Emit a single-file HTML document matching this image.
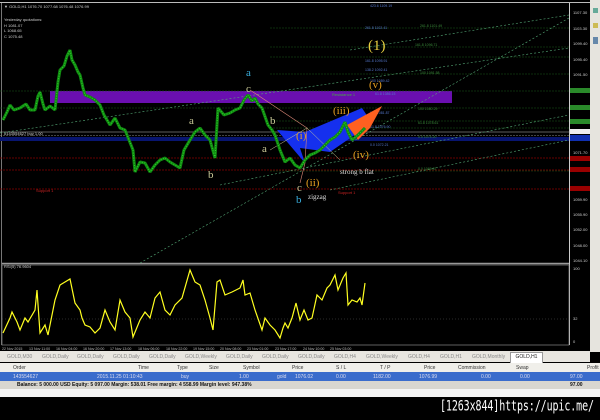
<!DOCTYPE html>
<html><head><meta charset="utf-8"><style>
body{margin:0;width:600px;height:420px;background:#000;overflow:hidden;font-family:"Liberation Sans",sans-serif;position:relative}
.abs{position:absolute}
.tabs{left:0;top:351px;width:590px;height:11px;background:#e8e6e0;font-size:5px;color:#888}
.tabs span{position:absolute;top:3px}
.hdr{left:0;top:363px;width:600px;height:9px;background:#f0efea;font-size:5px;color:#333}
.row{left:0;top:372px;width:600px;height:9px;background:#3a6ccc;font-size:5px;color:#dde}
.bal{left:0;top:381px;width:600px;height:8px;background:#d8d6d0;font-size:5px;font-weight:bold;color:#111}
.wh{left:0;top:389px;width:600px;height:8px;background:#f4f4f4}
.hdr span,.row span{position:absolute;top:2px}
</style></head><body>
<svg class="abs" style="left:0;top:0" width="600" height="352">
<rect x="0" y="0" width="600" height="352" fill="#000"/>
<line x1="0" y1="2.5" x2="590" y2="2.5" stroke="#bbb"/>
<rect x="590" y="0" width="10" height="352" fill="#e6e4de"/>
<rect x="593" y="8" width="5" height="5" fill="#6a9"/><rect x="593" y="23" width="5" height="5" fill="#cb5"/><rect x="593" y="37" width="5" height="7" fill="#68a"/>
<line x1="569.5" y1="3" x2="569.5" y2="345" stroke="#ccc"/>
<line x1="2" y1="263.5" x2="569" y2="263.5" stroke="#999" stroke-width="1.5"/>
<rect x="2" y="265" width="567" height="80" fill="none" stroke="#888" stroke-width=".7"/>
<line x1="1.5" y1="3" x2="1.5" y2="345" stroke="#777"/>
<rect x="50" y="91" width="402" height="12" fill="#6a0fb0"/>
<rect x="0" y="137" width="569" height="4" fill="#081570"/>
<line x1="0" y1="132" x2="569" y2="132" stroke="#bbb" stroke-width=".6"/>
<line x1="0" y1="135.5" x2="569" y2="135.5" stroke="#888" stroke-dasharray="2 1" stroke-width=".5"/>
<g stroke="#800" stroke-width=".7" stroke-dasharray="2 1"><line x1="0" y1="158" x2="569" y2="158"/><line x1="0" y1="170" x2="569" y2="170"/><line x1="0" y1="189" x2="569" y2="189"/></g>
<g stroke="#1a5a1a" stroke-width=".6" stroke-dasharray="2 1"><line x1="0" y1="91" x2="569" y2="91"/><line x1="0" y1="108" x2="569" y2="108"/><line x1="270" y1="28" x2="569" y2="28"/><line x1="270" y1="47" x2="569" y2="47"/><line x1="270" y1="57" x2="569" y2="57"/><line x1="270" y1="74" x2="569" y2="74"/><line x1="270" y1="121" x2="569" y2="121"/><line x1="270" y1="128" x2="569" y2="128"/><line x1="270" y1="171" x2="569" y2="171"/></g>
<g stroke="#5a7" stroke-width=".6" stroke-dasharray="2 2"><line x1="0" y1="133" x2="569" y2="48"/><line x1="220" y1="185" x2="569" y2="115"/><line x1="140" y1="263" x2="569" y2="18"/><line x1="330" y1="190" x2="569" y2="140"/><line x1="350" y1="50" x2="569" y2="15"/></g>
<g font-size="3.5" fill="#5577cc"><text x="370" y="7">423.6 1109.19</text><text x="365" y="29">261.8 1102.41</text><text x="365" y="62">161.8 1095.91</text><text x="365" y="71">138.2 1092.41</text><text x="370" y="82">100 1089.42</text><text x="375" y="95">61.8 1086.15</text><text x="370" y="114">100 1081.87</text><text x="370" y="128">61.8 1076.90</text><text x="370" y="146">0.0 1072.21</text></g>
<g font-size="3.5" fill="#3a8a3a"><text x="420" y="27">261.8 1101.49</text><text x="415" y="46">161.8 1096.71</text><text x="420" y="74">100 1091.58</text><text x="418" y="110">100 1080.29</text><text x="418" y="124">61.8 1078.61</text><text x="418" y="138">0.0 1074.20</text><text x="418" y="170">0.0 1065.37</text></g>
<text x="332" y="96" font-size="4" fill="#4a4">Resistance 1</text>
<text x="36" y="192" font-size="4" fill="#c22">Support 1</text><text x="338" y="194" font-size="4" fill="#c22">Support 1</text>
<polygon points="277,130 305,163 300,148 330,152 372,123 362,108 305,132" fill="#1530ee"/>
<polygon points="347,125 358,140 370,128 382,106" fill="#ff6020"/>
<polyline points="250,90 307,128 305,163 300,183" fill="none" stroke="#d87" stroke-width=".6"/>
<polyline points="270,150 307,128 340,160" fill="none" stroke="#cc9" stroke-width=".5"/>
<g fill="none" stroke-linejoin="bevel">
<polyline stroke="#108a10" stroke-width="3" points="3,120 7,112 10,105 14,110 20,108 26,104 30,110 35,110 38,96 40,92 43,104 45,110 50,106 55,110 58,82 60,70 64,66 67,56 70,50 72,60 75,65 78,72 80,75 83,88 85,95 90,97 95,100 100,105 104,115 110,125 115,118 120,128 125,130 129,140 133,150 135,172 140,162 145,163 150,172 155,165 160,160 165,158 170,162 175,165 180,168 184,150 190,140 195,132 200,128 205,135 210,140 215,158 218,108 224,115 230,113 235,110 240,108 244,100 248,95 252,101 255,98 258,104 262,108 268,125 272,130 275,135 280,150 285,162 290,158 295,165 300,168 305,160 310,155 315,153 320,150 325,145 330,140 335,137 340,132 345,122 348,132 352,140 358,135 362,131 365,128"/>
<polyline stroke="#2fd02f" stroke-width="1" stroke-dasharray="1 1.5" points="3,120 7,112 10,105 14,110 20,108 26,104 30,110 35,110 38,96 40,92 43,104 45,110 50,106 55,110 58,82 60,70 64,66 67,56 70,50 72,60 75,65 78,72 80,75 83,88 85,95 90,97 95,100 100,105 104,115 110,125 115,118 120,128 125,130 129,140 133,150 135,172 140,162 145,163 150,172 155,165 160,160 165,158 170,162 175,165 180,168 184,150 190,140 195,132 200,128 205,135 210,140 215,158 218,108 224,115 230,113 235,110 240,108 244,100 248,95 252,101 255,98 258,104 262,108 268,125 272,130 275,135 280,150 285,162 290,158 295,165 300,168 305,160 310,155 315,153 320,150 325,145 330,140 335,137 340,132 345,122 348,132 352,140 358,135 362,131 365,128"/>
</g>
<g font-family="Liberation Serif,serif" font-size="11">
<text x="246" y="76" fill="#3ab0e0">a</text><text x="246" y="92" fill="#cc9">c</text>
<text x="189" y="124" fill="#cc9">a</text><text x="208" y="178" fill="#cc9">b</text>
<text x="270" y="124" fill="#cc9">b</text><text x="262" y="152" fill="#cc9">a</text>
<text x="297" y="191" fill="#cc9">c</text><text x="296" y="203" fill="#3ab0e0">b</text>
<text x="296" y="139" fill="#e8a020">(i)</text><text x="306" y="186" fill="#e8a020">(ii)</text>
<text x="333" y="114" fill="#e8a020">(iii)</text><text x="353" y="158" fill="#e8a020">(iv)</text>
<text x="369" y="88" fill="#e8a020">(v)</text>
<text x="368" y="50" fill="#e8d040" font-size="15">(1)</text>
<text x="340" y="174" fill="#ddd" font-size="7">strong b flat</text>
<text x="308" y="199" fill="#ddd" font-size="7">zigzag</text>
</g>
<g font-size="4" fill="#ccc"><text x="4" y="8">▼ GOLD,H1  1076.70 1077.68 1076.48 1076.99</text><text x="4" y="21">Yesterday quotations:</text><text x="4" y="27">H 1081.07</text><text x="4" y="32">L 1068.65</text><text x="4" y="38">C 1075.48</text><text x="4" y="135">#143554627 buy 1.00</text><text x="4" y="268">RSI(5) 76.9604</text></g>
<g font-size="4" fill="#ccc"><text x="573" y="14">1107.30</text><text x="573" y="30">1103.30</text><text x="573" y="45">1099.40</text><text x="573" y="61">1095.40</text><text x="573" y="76">1091.50</text><text x="573" y="122">1079.70</text><text x="573" y="154">1071.70</text><text x="573" y="201">1059.90</text><text x="573" y="216">1055.90</text><text x="573" y="231">1052.00</text><text x="573" y="247">1048.00</text><text x="573" y="262">1044.10</text><text x="573" y="270">100</text><text x="573" y="320">32</text><text x="573" y="343">0</text></g>
<rect x="570" y="88" width="20" height="5" fill="#2a8a2a"/><rect x="570" y="105" width="20" height="5" fill="#2a8a2a"/><rect x="570" y="119" width="20" height="5" fill="#2a8a2a"/>
<rect x="570" y="129" width="20" height="5" fill="#eee"/><rect x="570" y="135" width="20" height="6" fill="#1030b0"/>
<rect x="570" y="156" width="20" height="5" fill="#900"/><rect x="570" y="167" width="20" height="5" fill="#900"/><rect x="570" y="186" width="20" height="5" fill="#900"/>
<line x1="2" y1="319" x2="569" y2="319" stroke="#555" stroke-dasharray="1 2" stroke-width=".5"/>
<polyline fill="none" stroke="#ffff20" stroke-width="1.2" points="3,333 10,318 12,312 17,322 20,330 25,318 28,322 35,310 37,290 40,333 45,325 48,335 55,300 60,285 70,279 75,303 80,310 82,318 85,325 90,327 95,333 100,328 105,310 110,322 115,330 120,300 125,312 130,318 133,337 140,320 145,312 150,318 155,298 160,292 165,310 170,315 175,305 182,298 190,270 195,282 200,285 205,300 210,318 213,330 217,282 220,280 225,295 232,292 240,288 243,280 245,295 250,293 255,310 262,330 265,318 270,325 275,330 280,338 283,328 285,323 288,328 292,318 296,303 300,320 304,310 308,320 312,318 317,295 322,300 327,288 330,285 335,275 338,290 343,278 346,273 348,305 352,300 357,302 360,298 362,305 365,283"/>
<g font-size="3.6" fill="#bbb"><text x="2" y="350">22 Nov 2015</text><text x="29" y="350">13 Nov 11:00</text><text x="56" y="350">16 Nov 04:00</text><text x="83" y="350">16 Nov 20:00</text><text x="110" y="350">17 Nov 13:00</text><text x="138" y="350">18 Nov 06:00</text><text x="166" y="350">18 Nov 22:00</text><text x="193" y="350">19 Nov 15:00</text><text x="220" y="350">20 Nov 08:00</text><text x="247" y="350">23 Nov 01:00</text><text x="275" y="350">23 Nov 17:00</text><text x="303" y="350">24 Nov 10:00</text><text x="330" y="350">25 Nov 03:00</text></g>
</svg>
<div class="abs tabs"><span style="left:7px">GOLD,M30</span><span style="left:42px">GOLD,Daily</span><span style="left:77px">GOLD,Daily</span><span style="left:113px">GOLD,Daily</span><span style="left:149px">GOLD,Daily</span><span style="left:185px">GOLD,Weekly</span><span style="left:226px">GOLD,Daily</span><span style="left:262px">GOLD,Daily</span><span style="left:298px">GOLD,Daily</span><span style="left:334px">GOLD,H4</span><span style="left:366px">GOLD,Weekly</span><span style="left:408px">GOLD,H4</span><span style="left:440px">GOLD,H1</span><span style="left:472px">GOLD,Monthly</span>
<div class="abs" style="left:510px;top:1px;width:31px;height:10px;background:#fff;border:1px solid #999;font-size:5px;color:#222;text-align:center;line-height:9px">GOLD,H1</div></div>
<div class="abs hdr"><span style="left:13px">Order</span><span style="left:138px">Time</span><span style="left:177px">Type</span><span style="left:209px">Size</span><span style="left:243px">Symbol</span><span style="left:292px">Price</span><span style="left:336px">S / L</span><span style="left:380px">T / P</span><span style="left:424px">Price</span><span style="left:458px">Commission</span><span style="left:516px">Swap</span><span style="left:587px">Profit</span></div>
<div class="abs row"><span style="left:13px">143554627</span><span style="left:97px">2015.11.25 01:10:43</span><span style="left:181px">buy</span><span style="left:239px">1.00</span><span style="left:277px">gold</span><span style="left:295px">1076.02</span><span style="left:336px">0.00</span><span style="left:373px">1182.00</span><span style="left:419px">1076.99</span><span style="left:481px">0.00</span><span style="left:520px">0.00</span><span style="left:570px">97.00</span></div>
<div class="abs bal" style="padding-left:17px;box-sizing:border-box;line-height:8px">Balance: 5 000.00 USD  Equity: 5 097.00  Margin: 538.01  Free margin: 4 558.99  Margin level: 947.38%<span class="abs" style="left:570px;top:0">97.00</span></div>
<div class="abs wh"></div>
<div class="abs" style="left:440px;top:399px;font-family:'DejaVu Sans Mono',monospace;font-size:10px;color:#fff;transform:scaleY(1.45);transform-origin:0 0;letter-spacing:-0.1px">[1263x844]https://upic.me/</div>
</body></html>
